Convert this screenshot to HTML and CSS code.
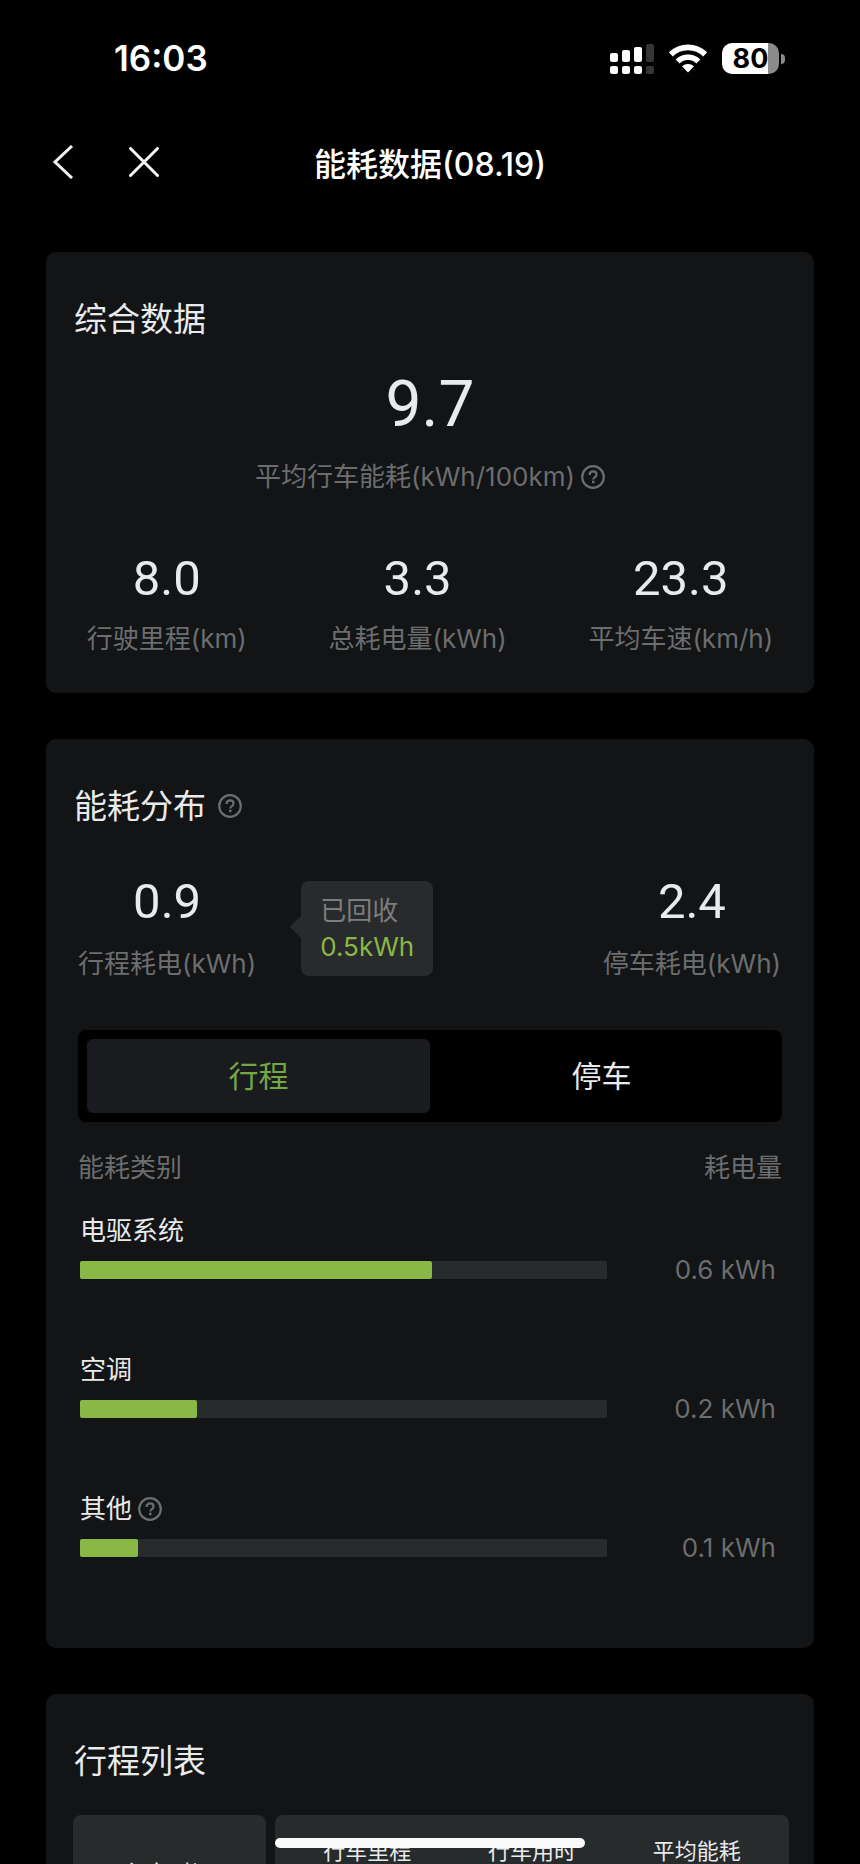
FILE: index.html
```html
<!DOCTYPE html>
<html lang="zh-CN">
<head>
<meta charset="utf-8">
<meta name="viewport" content="width=device-width, initial-scale=1">
<title>能耗数据(08.19)</title>
<link rel="stylesheet" href="styles.css">
</head>
<body>
<svg class="sprite" aria-hidden="true">
  <symbol id="help" viewBox="0 0 24 24">
    <circle cx="12" cy="12" r="10.8" fill="none" stroke="currentColor" stroke-width="2.2"/>
    <path d="M8.600 9.900c0-2.200 1.500-3.500 3.500-3.500s3.400 1.200 3.400 3c0 1.500-.9 2.200-1.900 2.900-.9.600-1.300 1.100-1.300 2.200" fill="none" stroke="currentColor" stroke-width="2.2"/>
    <rect x="11" y="15.700" width="2.500" height="2.500" fill="currentColor"/>
  </symbol>
</svg>
<div class="screen">
  <header class="status">
    <time class="clock">16:03</time>
    <div class="status-icons">
      <svg class="signal" viewBox="0 0 44 31" aria-label="信号">
        <g fill="#fff">
          <rect x="0" y="10" width="8" height="9" rx="2"/><rect x="12" y="7" width="8" height="12" rx="2"/><rect x="24" y="4" width="8" height="15" rx="2"/>
          <rect x="0" y="23" width="8" height="8" rx="2"/><rect x="12" y="23" width="8" height="8" rx="2"/><rect x="24" y="23" width="8" height="8" rx="2"/>
        </g>
        <g fill="#363636"><rect x="36" y="1" width="8" height="18" rx="2"/><rect x="36" y="23" width="8" height="8" rx="2"/></g>
      </svg>
      <svg class="wifi" viewBox="0 0 38 29" aria-label="无线网络">
        <g fill="none" stroke="#fff" stroke-width="5.600">
          <path d="M1.800 10.400A24.500 24.500 0 0 1 36.200 10.400"/>
          <path d="M8.600 17.400A15 15 0 0 1 29.400 17.400"/>
        </g>
        <path d="M19 28.500l-6-6.200a9 9 0 0 1 12 0z" fill="#fff"/>
      </svg>
      <div class="battery"><span class="battery-level">80</span></div>
    </div>
  </header>

  <nav class="navbar">
    <div class="nav-actions">
      <button class="icon-button" type="button" aria-label="返回">
        <svg class="chevron" viewBox="0 0 22 34"><path d="M20 1L3 17l17 16" fill="none" stroke="#f2f2f2" stroke-width="3"/></svg>
      </button>
      <button class="icon-button" type="button" aria-label="关闭">
        <svg class="cross" viewBox="0 0 30 30"><path d="M1.500 1.500l27 27M28.500 1.500l-27 27" fill="none" stroke="#f6f6f6" stroke-width="3" stroke-linecap="round"/></svg>
      </button>
    </div>
    <h1 class="page-title">能耗数据(08.19)</h1>
  </nav>

  <main class="content">
    <section class="card">
      <h2 class="card-title">综合数据</h2>
      <div class="hero">
        <strong class="hero-value">9.7</strong>
        <span class="label hero-label">平均行车能耗(kWh/100km)
          <button class="help" type="button" aria-label="说明"><svg><use href="#help"/></svg></button>
        </span>
      </div>
      <div class="stats">
        <div class="stat"><strong class="value">8.0</strong><span class="label">行驶里程(km)</span></div>
        <div class="stat"><strong class="value">3.3</strong><span class="label">总耗电量(kWh)</span></div>
        <div class="stat"><strong class="value">23.3</strong><span class="label">平均车速(km/h)</span></div>
      </div>
    </section>

    <section class="card">
      <h2 class="card-title">能耗分布
        <button class="help" type="button" aria-label="说明"><svg><use href="#help"/></svg></button>
      </h2>
      <div class="split">
        <div class="stat"><strong class="value">0.9</strong><span class="label">行程耗电(kWh)</span></div>
        <div class="recovered"><span>已回收</span><span class="recovered-value">0.5kWh</span></div>
        <div class="stat stat-end"><strong class="value">2.4</strong><span class="label">停车耗电(kWh)</span></div>
      </div>
      <div class="tabs" role="tablist">
        <button class="tab tab-active" type="button" role="tab" aria-selected="true">行程</button>
        <button class="tab" type="button" role="tab" aria-selected="false">停车</button>
      </div>
      <div class="list-head label"><span>能耗类别</span><span>耗电量</span></div>
      <ul class="usage">
        <li class="usage-item">
          <span class="usage-name">电驱系统</span>
          <div class="track"><div class="fill" style="width:66.7%"></div></div>
          <span class="usage-value">0.6 kWh</span>
        </li>
        <li class="usage-item">
          <span class="usage-name">空调</span>
          <div class="track"><div class="fill" style="width:22.2%"></div></div>
          <span class="usage-value">0.2 kWh</span>
        </li>
        <li class="usage-item">
          <span class="usage-name">其他
            <button class="help" type="button" aria-label="说明"><svg><use href="#help"/></svg></button>
          </span>
          <div class="track"><div class="fill" style="width:11.1%"></div></div>
          <span class="usage-value">0.1 kWh</span>
        </li>
      </ul>
    </section>

    <section class="card">
      <h2 class="card-title">行程列表</h2>
      <div class="trips">
        <table class="trip-table trip-time"><thead><tr><th>行车时间</th></tr></thead></table>
        <table class="trip-table trip-data"><thead><tr><th>行车里程</th><th>行车用时</th><th>平均能耗</th></tr></thead></table>
      </div>
    </section>
  </main>
  <div class="home-indicator"></div>
</div>
</body>
</html>
```
FILE: styles.css
```css
* { box-sizing: border-box; }

body {
  margin: 0;
  background: #000;
  color: #e9eaeb;
  font-family: Inter, "Noto Sans CJK SC", sans-serif;
  font-size: 26px;
  line-height: 36px;
}

button {
  padding: 0;
  border: 0;
  background: none;
  color: inherit;
  font: inherit;
  cursor: pointer;
}

h1, h2, ul { margin: 0; padding: 0; font-weight: 400; }
ul { list-style: none; }
svg { display: block; }

.sprite { position: absolute; width: 0; height: 0; }

.screen {
  display: flex;
  flex-direction: column;
  height: 100vh;
  overflow: hidden;
}

/* Status bar */
.status {
  flex: none;
  display: flex;
  align-items: center;
  justify-content: space-between;
  height: 116px;
  padding: 0 75px 0 114px;
}
.clock { color: #fff; font-size: 35px; font-weight: 600; }
.status-icons { display: flex; align-items: center; gap: 15px; }
.signal { width: 44px; height: 31px; }
.wifi { width: 38px; height: 29px; }
.battery {
  position: relative;
  width: 57px;
  height: 31px;
  margin-right: 6px;
  border-radius: 10px;
  background: linear-gradient(90deg, #fff 80%, #8b8b8b 80%);
}
.battery::after {
  content: "";
  position: absolute;
  left: 59px;
  top: 11px;
  width: 4px;
  height: 10px;
  border-radius: 0 4px 4px 0;
  background: #8b8b8b;
}
.battery-level {
  display: block;
  color: #000;
  font-size: 27px;
  font-weight: 700;
  line-height: 31px;
  text-align: center;
}

/* Navigation bar */
.navbar {
  flex: none;
  display: grid;
  grid-template-columns: 1fr auto 1fr;
  align-items: center;
  height: 98px;
  padding: 0 52px;
}
.nav-actions { display: flex; align-items: center; gap: 55px; height: 92px; align-self: start; }
.chevron { width: 22px; height: 34px; }
.cross { width: 30px; height: 30px; }
.page-title { color: #fff; font-size: 32px; font-weight: 500; line-height: 48px; }

/* Cards */
.content {
  flex: 1;
  display: flex;
  flex-direction: column;
  gap: 46px;
  padding: 38px 46px;
  overflow-y: auto;
  scrollbar-width: none;
}
.card {
  flex: none;
  border-radius: 10px;
  background: #121416;
}
.card-title {
  display: flex;
  align-items: center;
  gap: 12px;
  padding: 43px 28px 0;
  font-size: 33px;
  line-height: 48px;
}
.label { color: #6c6d6f; white-space: nowrap; }
.help { width: 24px; height: 24px; color: #6c6d6f; }
.help svg { width: 24px; height: 24px; }

.hero, .stat { display: flex; flex-direction: column; align-items: center; }
.hero { padding-top: 24px; gap: 16px; }
.hero-value, .value { font-family: Roboto, sans-serif; font-weight: 400; }
.hero-value { font-size: 64px; line-height: 76px; }
.hero-label { display: flex; align-items: center; gap: 6px; }
.value { font-size: 49px; line-height: 56px; }
.stats { display: flex; justify-content: space-around; padding: 56px 0 36px; }
.stat { gap: 14px; }

/* Distribution */
.split { display: flex; align-items: flex-start; padding: 44px 33px 0 32px; }
.split .stat { gap: 16px; }
.stat-end { margin-left: auto; }
.recovered {
  position: relative;
  display: flex;
  flex-direction: column;
  margin: 7px 0 0 45px;
  padding: 12px 19px 11px;
  border-radius: 8px;
  background: #282a2b;
  color: #7c7d7e;
}
.recovered::before {
  content: "";
  position: absolute;
  left: -11px;
  top: 35px;
  border: solid transparent;
  border-width: 11px 11px 11px 0;
  border-right-color: #282a2b;
}
.recovered-value { color: #8ab846; }
.tabs {
  display: grid;
  grid-template-columns: 1fr 1fr;
  margin: 48px 32px 0;
  padding: 9px;
  border-radius: 8px;
  background: #000;
}
.tab { height: 74px; border-radius: 6px; font-size: 30px; }
.tab-active { background: #1a1b1e; color: #74a845; }
.list-head { display: flex; justify-content: space-between; padding: 28px 32px 0; }
.usage { display: grid; gap: 73px; padding: 27px 38px 91px 34px; }
.usage-item {
  display: grid;
  grid-template-columns: 1fr 169px;
  row-gap: 12px;
  align-items: center;
}
.usage-name { grid-column: 1 / -1; display: flex; align-items: center; gap: 6px; }
.track { height: 18px; border-radius: 2px; background: #282b2c; }
.fill { height: 100%; border-radius: 2px; background: #8ab846; }
.usage-value { color: #6c6d6f; line-height: 18px; text-align: right; }

/* Trip list */
.trips { display: flex; gap: 9px; padding: 30px 25px 40px 27px; }
.trip-table {
  height: 116px;
  padding: 0 10px;
  border-collapse: separate;
  border-spacing: 0;
  border-radius: 8px;
  background: #282b2c;
  table-layout: fixed;
  font-size: 22px;
}
.trip-table th { padding: 0; font-weight: 400; }
.trip-time { width: 193px; }
.trip-data { flex: 1; }
.trip-data th { padding-bottom: 44px; }

.home-indicator {
  position: fixed;
  bottom: 16px;
  left: 32%;
  right: 32%;
  height: 10px;
  border-radius: 5px;
  background: #fafafa;
}
```
